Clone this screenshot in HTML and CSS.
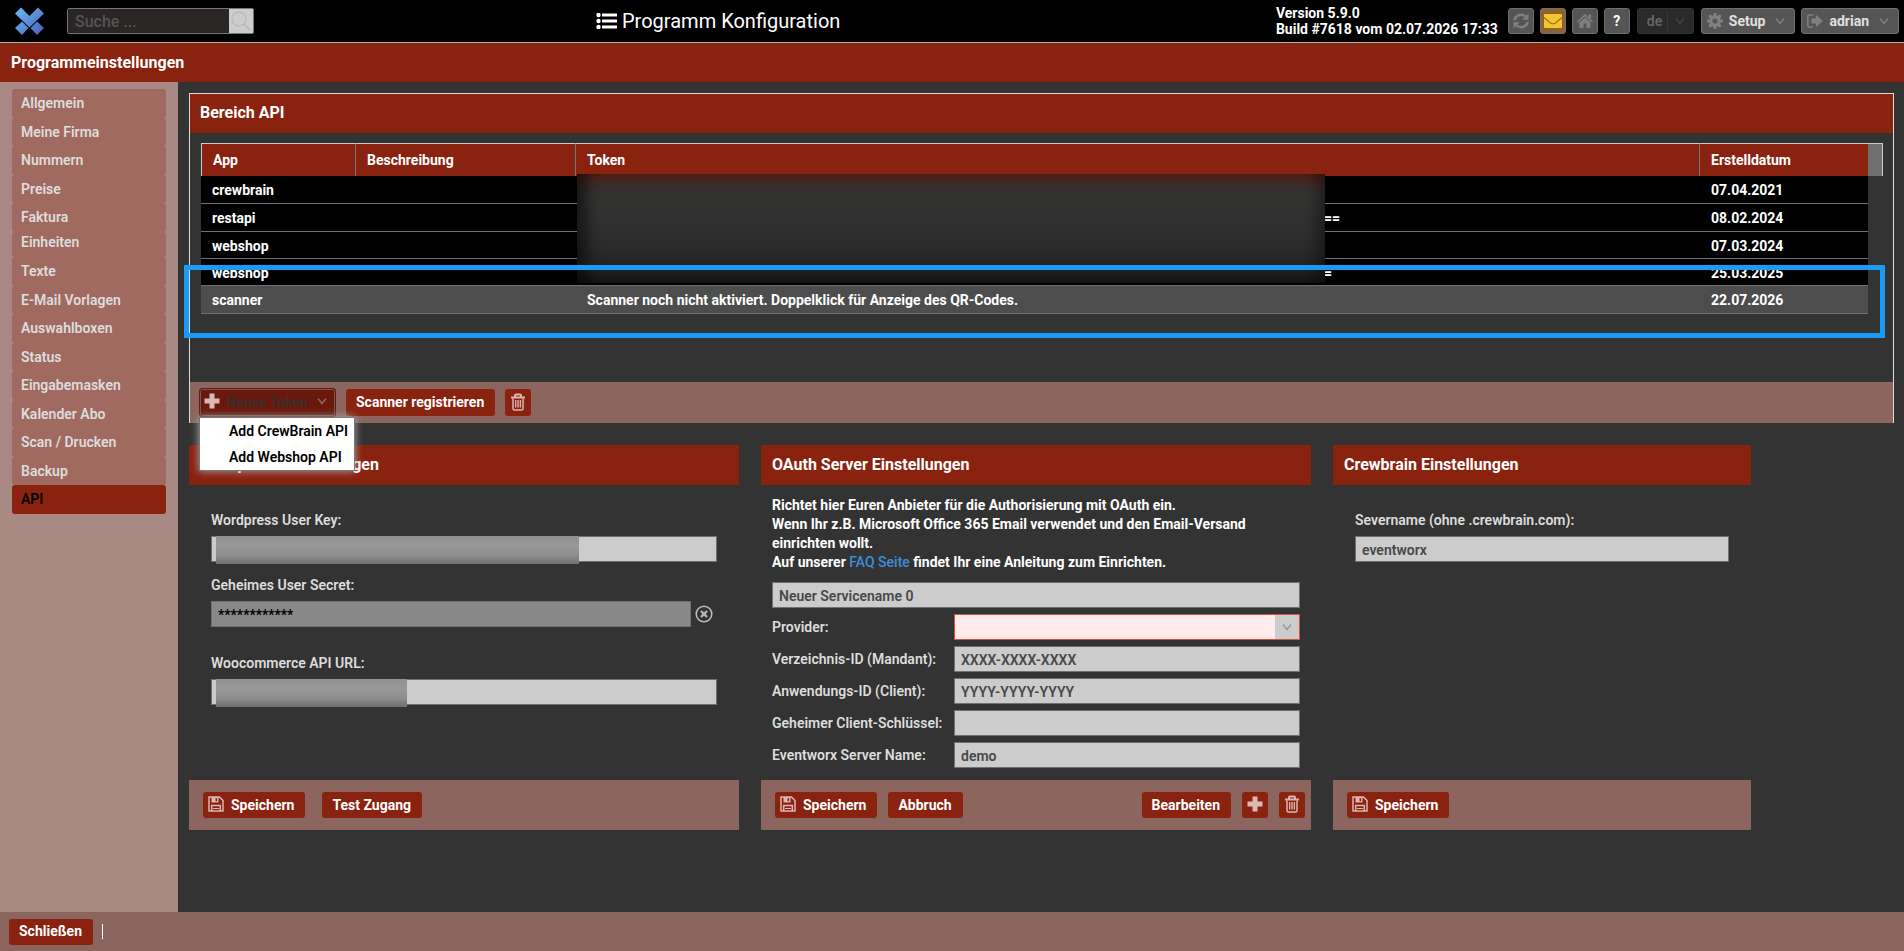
FILE: index.html
```html
<!DOCTYPE html>
<html lang="de">
<head>
    <meta charset="UTF-8">
    <meta name="viewport" content="width=device-width, initial-scale=1.0">
    <title>Programm Konfiguration</title>
    <link rel="stylesheet" href="styles.css">
</head>
<body>
    <!-- Icon set -->
    <svg class="icon-set" aria-hidden="true">
        <symbol id="i-chevron" viewBox="0 0 10 8"><path d="M1 1.500l4 5 4-5" fill="none" stroke="currentColor" stroke-width="1.500"/></symbol>
        <symbol id="i-plus" viewBox="0 0 16 16"><path d="M5.500 0.500h5v5h5v5h-5v5h-5v-5h-5v-5h5z" fill="currentColor"/></symbol>
        <symbol id="i-trash" viewBox="0 0 16 18">
            <path d="M1 4.500h14M5 4.500V2.500a1 1 0 0 1 1-1h4a1 1 0 0 1 1 1v2" fill="none" stroke="currentColor" stroke-width="2"/>
            <path d="M3 5.500v10a1.500 1.500 0 0 0 1.500 1.500h7a1.500 1.500 0 0 0 1.500-1.500v-10" fill="none" stroke="currentColor" stroke-width="1.500"/>
            <path d="M5.500 7v7.500M7.200 7v7.500M8.800 7v7.500M10.500 7v7.500" fill="none" stroke="currentColor"/>
        </symbol>
        <symbol id="i-save" viewBox="0 0 16 16">
            <path d="M1 1h10.500L15 4.500V15H1z" fill="none" stroke="currentColor" stroke-width="1.500"/>
            <path d="M3.500 1h7v5.500h-7z" fill="currentColor"/><path d="M7.500 2.200h1.600v3H7.500z" fill="#8a2210"/>
            <path d="M3.700 15V9.500h8.600V15" fill="none" stroke="currentColor" stroke-width="1.500"/>
            <path d="M5 12.500h6" stroke="currentColor"/>
        </symbol>
    </svg>

    <header class="topbar">
        <div class="topbar-left">
            <svg class="logo" viewBox="0 0 29 28">
                <defs>
                    <linearGradient id="logo-grad" gradientUnits="userSpaceOnUse" x1="2" y1="2" x2="27" y2="27">
                        <stop offset="0" stop-color="#63b9f0"/>
                        <stop offset="1" stop-color="#4f5fb8"/>
                    </linearGradient>
                </defs>
                <g fill="url(#logo-grad)">
                    <path d="M6 0.500l8.500 8.500L23 0.500l6 6L14.500 20.500 0 6.500z"/>
                    <path d="M7 14.500l6.500 6.500L7 28 0 21z"/>
                    <path d="M22 14.500l7 6.500-7 7-6.500-7z"/>
                </g>
            </svg>
            <div class="search">
                <input type="text" placeholder="Suche ..." aria-label="Suche">
                <button type="button" aria-label="Suchen">
                    <svg viewBox="0 0 22 22" width="22" height="22"><circle cx="9" cy="9" r="7" fill="none" stroke="#bbb" stroke-width="1.500"/><path d="M14 14l6 6" stroke="#bbb" stroke-width="2"/></svg>
                </button>
            </div>
        </div>
        <h1 class="page-title">
            <svg viewBox="0 0 21 16" width="21" height="16"><g fill="currentColor"><circle cx="2.500" cy="2" r="2.200"/><circle cx="2.500" cy="8" r="2.200"/><circle cx="2.500" cy="14" r="2.200"/><path d="M6 0.500h15v3H6zM6 6.500h15v3H6zM6 12.500h15v3H6z"/></g></svg>
            Programm Konfiguration
        </h1>
        <div class="topbar-right">
            <div class="version">Version 5.9.0<br>Build #7618 vom 02.07.2026 17:33</div>
            <button type="button" class="tool" aria-label="Neu laden">
                <svg viewBox="0 0 16 16" width="16" height="16"><path d="M1.500 7A6.500 6 0 0 1 12.500 3.600M14.500 9A6.500 6 0 0 1 3.500 12.400" fill="none" stroke="currentColor" stroke-width="2.500"/><path d="M15.500 0.500v6.200H9.300zM.5 15.500V9.300h6.200z" fill="currentColor"/></svg>
            </button>
            <button type="button" class="tool tool-mail" aria-label="Nachrichten">
                <svg viewBox="0 0 20 16" width="20" height="16"><rect x="1" y="1" width="18" height="14" rx="1" fill="#f2c531"/><path d="M1 4.500l6.500 5.500q2.500 1.500 5 0L19 4.500" fill="none" stroke="#a07015" stroke-width="1.200"/></svg>
            </button>
            <button type="button" class="tool" aria-label="Startseite">
                <svg viewBox="0 0 16 16" width="16" height="16"><path d="M8 1l8 7.500-1 1L8 3.200 1 9.500l-1-1zM11.500 1.500H14V6l-2.500-2.300zM8 4.500l5.500 5V15H9.500v-4.500h-3V15h-4V9.500z" fill="currentColor"/></svg>
            </button>
            <button type="button" class="tool tool-help">?</button>
            <div class="lang">
                <select aria-label="Sprache" disabled><option>de</option></select>
                <svg width="10" height="8"><use href="#i-chevron"/></svg>
            </div>
            <button type="button" class="tool tool-menu">
                <svg viewBox="0 0 16 16" width="16" height="16"><circle cx="8" cy="8" r="4.200" fill="none" stroke="currentColor" stroke-width="3.400"/><path d="M8 0v3M8 13v3M0 8h3M13 8h3M2.300 2.300l2.200 2.200M11.500 11.500l2.200 2.200M2.300 13.700l2.200-2.200M11.500 4.500l2.200-2.200" stroke="currentColor" stroke-width="3"/></svg>
                <span>Setup</span>
                <svg width="10" height="8"><use href="#i-chevron"/></svg>
            </button>
            <button type="button" class="tool tool-menu">
                <svg viewBox="0 0 16 16" width="16" height="16"><path d="M6 2H2.500Q.8 2 .8 4v8q0 2 1.700 2H6" fill="none" stroke="currentColor" stroke-width="1.500"/><path d="M4.500 5.500H9V2l7 6-7 6v-3.500H4.500z" fill="currentColor"/></svg>
                <span>adrian</span>
                <svg width="10" height="8"><use href="#i-chevron"/></svg>
            </button>
        </div>
    </header>

    <h2 class="titlebar">Programmeinstellungen</h2>

    <div class="content">
        <nav class="sidebar">
            <a href="#">Allgemein</a>
            <a href="#">Meine Firma</a>
            <a href="#">Nummern</a>
            <a href="#">Preise</a>
            <a href="#">Faktura</a>
            <a href="#" class="compact">Einheiten</a>
            <a href="#">Texte</a>
            <a href="#">E-Mail Vorlagen</a>
            <a href="#">Auswahlboxen</a>
            <a href="#">Status</a>
            <a href="#">Eingabemasken</a>
            <a href="#">Kalender Abo</a>
            <a href="#">Scan / Drucken</a>
            <a href="#">Backup</a>
            <a href="#" class="active">API</a>
        </nav>

        <main class="main">
            <section class="panel">
                <h3 class="panel-head">Bereich API</h3>
                <div class="grid-area">
                    <table class="tokens">
                        <colgroup>
                            <col class="c-app"><col class="c-desc"><col><col class="c-date"><col class="c-scroll">
                        </colgroup>
                        <thead>
                            <tr><th>App</th><th>Beschreibung</th><th>Token</th><th>Erstelldatum</th><td class="scroll-head"></td></tr>
                        </thead>
                        <tbody>
                            <tr><td>crewbrain</td><td></td><td></td><td>07.04.2021</td></tr>
                            <tr><td>restapi</td><td></td><td><span class="token-gap"></span>==</td><td>08.02.2024</td></tr>
                            <tr><td>webshop</td><td></td><td></td><td>07.03.2024</td></tr>
                            <tr><td>webshop</td><td></td><td><span class="token-gap"></span>=</td><td>25.03.2025</td></tr>
                            <tr class="selected"><td>scanner</td><td></td><td>Scanner noch nicht aktiviert. Doppelklick für Anzeige des QR-Codes.</td><td>22.07.2026</td></tr>
                        </tbody>
                    </table>
                    <div class="token-mask"></div>
                </div>
                <div class="marker"></div>
                <div class="panel-foot">
                    <div class="dropdown">
                        <button type="button" class="btn btn-open">
                            <svg width="16" height="16"><use href="#i-plus"/></svg>
                            <span>Neues Token</span>
                            <svg width="10" height="8"><use href="#i-chevron"/></svg>
                        </button>
                        <div class="menu">
                            <button type="button">Add CrewBrain API</button>
                            <button type="button">Add Webshop API</button>
                        </div>
                    </div>
                    <button type="button" class="btn">Scanner registrieren</button>
                    <button type="button" class="btn btn-icon" aria-label="Token löschen"><svg width="16" height="18"><use href="#i-trash"/></svg></button>
                </div>
            </section>

            <div class="cards">
                <section class="card">
                    <h3 class="card-head">Wordpress Einstellungen</h3>
                    <div class="card-body">
                        <div class="field">
                            <label for="wp-key">Wordpress User Key:</label>
                            <div class="masked"><input type="text" id="wp-key"><span class="mask mask-key"></span></div>
                        </div>
                        <div class="field field-secret">
                            <label for="wp-secret">Geheimes User Secret:</label>
                            <div class="secret">
                                <input type="text" id="wp-secret" value="************" readonly>
                                <button type="button" class="clear" aria-label="Leeren">
                                    <svg viewBox="0 0 18 18" width="18" height="18"><circle cx="9" cy="9" r="7.800" fill="none" stroke="currentColor" stroke-width="1.600"/><path d="M6 6l6 6M12 6l-6 6" stroke="currentColor" stroke-width="2.200"/></svg>
                                </button>
                            </div>
                        </div>
                        <div class="field">
                            <label for="woo-url">Woocommerce API URL:</label>
                            <div class="masked"><input type="text" id="woo-url"><span class="mask mask-url"></span></div>
                        </div>
                    </div>
                    <div class="card-foot card-foot-wide">
                        <button type="button" class="btn btn-save"><svg width="16" height="16"><use href="#i-save"/></svg>Speichern</button>
                        <button type="button" class="btn">Test Zugang</button>
                    </div>
                </section>

                <section class="card">
                    <h3 class="card-head">OAuth Server Einstellungen</h3>
                    <div class="card-body oauth">
                        <p>Richtet hier Euren Anbieter für die Authorisierung mit OAuth ein.<br>
                        Wenn Ihr z.B. Microsoft Office 365 Email verwendet und den Email-Versand einrichten wollt.<br>
                        Auf unserer <a href="#">FAQ Seite</a> findet Ihr eine Anleitung zum Einrichten.</p>
                        <input type="text" value="Neuer Servicename 0" aria-label="Servicename">
                        <div class="row">
                            <label for="provider">Provider:</label>
                            <div class="select">
                                <select id="provider"><option></option></select>
                                <span class="select-arrow"><svg width="10" height="8"><use href="#i-chevron"/></svg></span>
                            </div>
                        </div>
                        <div class="row">
                            <label for="tenant">Verzeichnis-ID (Mandant):</label>
                            <input type="text" id="tenant" value="XXXX-XXXX-XXXX">
                        </div>
                        <div class="row">
                            <label for="client">Anwendungs-ID (Client):</label>
                            <input type="text" id="client" value="YYYY-YYYY-YYYY">
                        </div>
                        <div class="row">
                            <label for="client-key">Geheimer Client-Schlüssel:</label>
                            <input type="text" id="client-key">
                        </div>
                        <div class="row">
                            <label for="server">Eventworx Server Name:</label>
                            <input type="text" id="server" value="demo">
                        </div>
                    </div>
                    <div class="card-foot">
                        <button type="button" class="btn btn-save"><svg width="16" height="16"><use href="#i-save"/></svg>Speichern</button>
                        <button type="button" class="btn">Abbruch</button>
                        <span class="spacer"></span>
                        <button type="button" class="btn">Bearbeiten</button>
                        <button type="button" class="btn btn-icon" aria-label="Hinzufügen"><svg width="16" height="16"><use href="#i-plus"/></svg></button>
                        <button type="button" class="btn btn-icon" aria-label="Löschen"><svg width="16" height="18"><use href="#i-trash"/></svg></button>
                    </div>
                </section>

                <section class="card card-small">
                    <h3 class="card-head">Crewbrain Einstellungen</h3>
                    <div class="card-body">
                        <div class="field">
                            <label for="cb-server">Severname (ohne .crewbrain.com):</label>
                            <input type="text" id="cb-server" value="eventworx">
                        </div>
                    </div>
                    <div class="card-foot">
                        <button type="button" class="btn btn-save"><svg width="16" height="16"><use href="#i-save"/></svg>Speichern</button>
                    </div>
                </section>
            </div>
        </main>
    </div>

    <footer class="bottombar">
        <button type="button" class="btn">Schließen</button>
        <span class="divider"></span>
    </footer>
</body>
</html>
```
FILE: styles.css
```css
* {
    box-sizing: border-box;
}
body {
    margin: 0;
    min-height: 100vh;
    display: flex;
    flex-direction: column;
    background: #333;
    color: #fff;
    font: 600 14px/20px Roboto, Arial, sans-serif;
}
h1, h2, h3, p {
    margin: 0;
}
button, input, select {
    font: inherit;
}
button {
    cursor: pointer;
}
svg {
    display: block;
    flex: none;
}
.icon-set {
    position: absolute;
    width: 0;
    height: 0;
}

/* top bar */
.topbar {
    display: grid;
    grid-template-columns: minmax(auto, 581px) auto 1fr;
    align-items: center;
    height: 43px;
    padding: 0 5px 0 15px;
    background: #000;
    border-bottom: 1px solid #aaa;
}
.topbar-left, .topbar-right {
    display: flex;
    align-items: center;
}
.topbar-left {
    gap: 23px;
}
.topbar-right {
    justify-content: flex-end;
    gap: 6px;
}
.logo {
    width: 29px;
    height: 28px;
}
.search {
    display: flex;
    width: 187px;
    height: 26px;
    border: 1px solid #777;
    border-radius: 2px;
}
.search input {
    flex: 1;
    min-width: 0;
    padding: 2px 7px 0;
    border: 0;
    background: #2b2626;
    color: #ccc;
    font-size: 16px;
    font-weight: 500;
}
.search input::placeholder {
    color: #555;
    opacity: 1;
}
.search button {
    width: 24px;
    padding: 1px;
    border: 0;
    background: #ccc;
}
.page-title {
    display: flex;
    align-items: center;
    gap: 5px;
    font-size: 20px;
    font-weight: 400;
}
.version {
    margin-right: 4px;
    font-weight: 700;
    line-height: 16px;
    white-space: nowrap;
}
.tool {
    display: flex;
    align-items: center;
    justify-content: center;
    width: 26px;
    height: 26px;
    padding: 0;
    border: 1px solid #6f6f6f;
    border-radius: 3px;
    background: #555;
    color: #808080;
}
.tool-mail {
    background: #8d6230;
}
.tool-help {
    color: #fff;
    font-weight: 700;
}
.tool-menu {
    width: auto;
    gap: 6px;
    padding: 0 9px 0 5px;
}
.tool-menu span {
    padding-right: 4px;
    color: #e0e0e0;
    font-weight: 700;
}
.lang {
    display: flex;
    align-items: center;
    width: 57px;
    height: 26px;
    margin: 0 1px;
    padding-right: 8px;
    border: 1px solid #333;
    border-radius: 3px;
    background: #2a2a2a;
    color: #444;
}
.lang select {
    appearance: none;
    width: 31px;
    margin-right: 7px;
    padding: 0 0 0 9px;
    border: 0;
    border-right: 1px solid #383838;
    background: transparent;
    color: #666;
    opacity: 1;
}

.titlebar {
    height: 39px;
    padding: 0 11px;
    background: #8a2210;
    font-size: 16px;
    font-weight: 700;
    line-height: 39px;
}

/* sidebar */
.content {
    flex: 1;
    display: flex;
}
.sidebar {
    width: 178px;
    padding: 7px 12px;
    background: #a98983;
}
.sidebar a {
    display: block;
    height: 29px;
    padding-left: 9px;
    border-radius: 3px;
    background: #a16a60;
    color: #ddd;
    line-height: 28px;
    text-decoration: none;
}
.sidebar a:nth-child(even) {
    height: 28px;
}
.sidebar a.compact {
    height: 25px;
    line-height: 20px;
}
.sidebar a.active {
    background: #8a2210;
    color: #000;
}

/* main */
.main {
    flex: 1;
    min-width: 0;
    padding: 11px 10px 11px 11px;
}
.panel {
    position: relative;
    border: 1px solid #ddd;
    border-bottom: 0;
}
.panel-head, .card-head {
    padding: 0 11px;
    background: #8a2210;
    font-size: 16px;
    font-weight: 700;
}
.panel-head {
    height: 39px;
    padding-left: 10px;
    line-height: 37px;
}
.card-head {
    line-height: 40px;
}
.grid-area {
    position: relative;
    height: 249px;
    padding: 10px 10px 0 11px;
}
.tokens {
    width: 100%;
    table-layout: fixed;
    border-collapse: separate;
    border-spacing: 0;
}
.c-app {
    width: 155px;
}
.c-desc {
    width: 220px;
}
.c-date {
    width: 168px;
}
.c-scroll {
    width: 15px;
}
.tokens th, .tokens td {
    padding: 0 0 0 11px;
    text-align: left;
    font-weight: 700;
}
.tokens th {
    height: 33px;
    border-top: 1px solid #ccc;
    border-right: 1px solid #777;
    background: #8a2210;
}
.tokens th:first-child {
    border-left: 1px solid #ccc;
}
.tokens th:nth-child(4) {
    border-right: 0;
}
.tokens .scroll-head {
    border-top: 1px solid #ccc;
    border-right: 1px solid #ccc;
    background: #6f6f6f;
}
.tokens tbody td {
    height: 28px;
    padding-top: 1px;
    border-bottom: 1px solid #707070;
    background: #000;
    white-space: nowrap;
}
.tokens tbody tr:nth-child(3) td, .tokens tbody tr:nth-child(4) td {
    height: 27px;
}
.tokens .selected td {
    background: #4d4d4d;
}
.token-gap {
    display: inline-block;
    width: 737px;
}
.token-mask {
    position: absolute;
    top: 41px;
    left: 387px;
    width: 748px;
    height: 109px;
    background: linear-gradient(#5a2018, #3a2c2a 10%, #333332 20%, #2e302e 50%, #242424 85%, #141414);
    box-shadow: inset 16px 0 14px -6px #0008, inset -16px 0 14px -8px #0006;
}
/* points at the freshly added scanner row */
.marker {
    position: absolute;
    top: 171px;
    left: -6px;
    right: 8px;
    height: 73px;
    border: 5px solid #1b9af7;
    pointer-events: none;
}
.panel-foot {
    display: flex;
    align-items: center;
    gap: 10px;
    height: 41px;
    padding-left: 9px;
    background: #8c665e;
}
.panel-foot .btn {
    height: 27px;
}

/* buttons */
.btn {
    display: flex;
    align-items: center;
    justify-content: center;
    height: 26px;
    padding: 0 11px 1px 10px;
    border: 0;
    border-radius: 3px;
    background: #8a2210;
    color: #fff;
    font-weight: 700;
    white-space: nowrap;
}
.btn svg {
    margin-bottom: 2px;
    color: #dcb8b2;
}
.btn-icon {
    width: 26px;
    padding: 0;
}
.btn-save {
    gap: 7px;
    padding-left: 5px;
}
.dropdown {
    position: relative;
}
.panel-foot .btn-open {
    gap: 7px;
    width: 137px;
    height: 29px;
    padding: 0 8px 1px 4px;
    border: 1px solid #6b180c;
    background: #6b180c;
    box-shadow: inset 0 0 0 1px #6b5a55;
    color: #3a2e2c;
}
.btn-open span {
    flex: 1;
    text-align: left;
}
.btn-open svg:last-child {
    color: #8c665e;
}
.menu {
    position: absolute;
    z-index: 5;
    top: 29px;
    left: 0;
    width: 156px;
    border: 1px solid #777;
    background: #fff;
    box-shadow: 0 0 8px #aaa;
}
.menu button {
    display: block;
    height: 26px;
    padding: 0 0 0 29px;
    border: 0;
    background: none;
    color: #000;
    white-space: nowrap;
}

/* cards */
.cards {
    display: flex;
    gap: 22px;
    margin-top: 22px;
}
.card {
    display: flex;
    flex: 0 1 550px;
    flex-direction: column;
    min-width: 0;
}
.card-small {
    flex-basis: 418px;
}
.card-body {
    flex: 1;
    padding: 25px 22px 12px;
    color: #ddd;
}
.card-body input {
    display: block;
    width: 100%;
    height: 26px;
    padding: 2px 6px 0;
    border: 1px solid #707070;
    background: #ccc;
    color: #484848;
}
.field {
    margin-bottom: 13px;
}
.field label {
    display: block;
    margin-bottom: 6px;
}
.field-secret {
    margin-bottom: 26px;
}
.secret {
    display: flex;
    align-items: center;
    gap: 4px;
}
.secret input {
    width: 480px;
    background: #888;
    color: #000;
}
.clear {
    padding: 0;
    border: 0;
    background: none;
    color: #bbb;
}
.masked {
    position: relative;
}
.mask {
    position: absolute;
    top: 0;
    left: 5px;
    height: 28px;
    background: linear-gradient(#909090, #999 35%, #8c8c8c 70%, #707070);
}
.mask-key {
    width: 363px;
}
.mask-url {
    width: 191px;
}
.oauth {
    display: flex;
    flex-direction: column;
    gap: 6px;
    padding: 11px 11px 12px;
}
.oauth p {
    margin-bottom: 4px;
    color: #fff;
    font-weight: 700;
    line-height: 19px;
}
.oauth a {
    color: #3b8fd9;
    font-weight: 500;
    text-decoration: none;
}
.row {
    display: grid;
    grid-template-columns: 182px 1fr;
    align-items: center;
}
.select {
    position: relative;
    height: 26px;
}
.select select {
    appearance: none;
    display: block;
    width: 100%;
    height: 26px;
    border: 1px solid #d9533a;
    border-radius: 0;
    background: #ffebeb;
}
.select-arrow {
    position: absolute;
    top: 1px;
    right: 1px;
    bottom: 1px;
    display: grid;
    place-items: center;
    width: 24px;
    background: #ccc;
    color: #999;
    pointer-events: none;
}
.card-foot {
    display: flex;
    align-items: center;
    gap: 11px;
    height: 50px;
    padding: 0 6px 0 14px;
    background: #8c665e;
}
.card-foot-wide {
    gap: 17px;
}
.spacer {
    flex: 1;
}

.bottombar {
    display: flex;
    align-items: center;
    gap: 9px;
    height: 39px;
    padding-left: 9px;
    background: #8c665e;
}
.divider {
    width: 1px;
    height: 15px;
    background: #fff;
}
```
